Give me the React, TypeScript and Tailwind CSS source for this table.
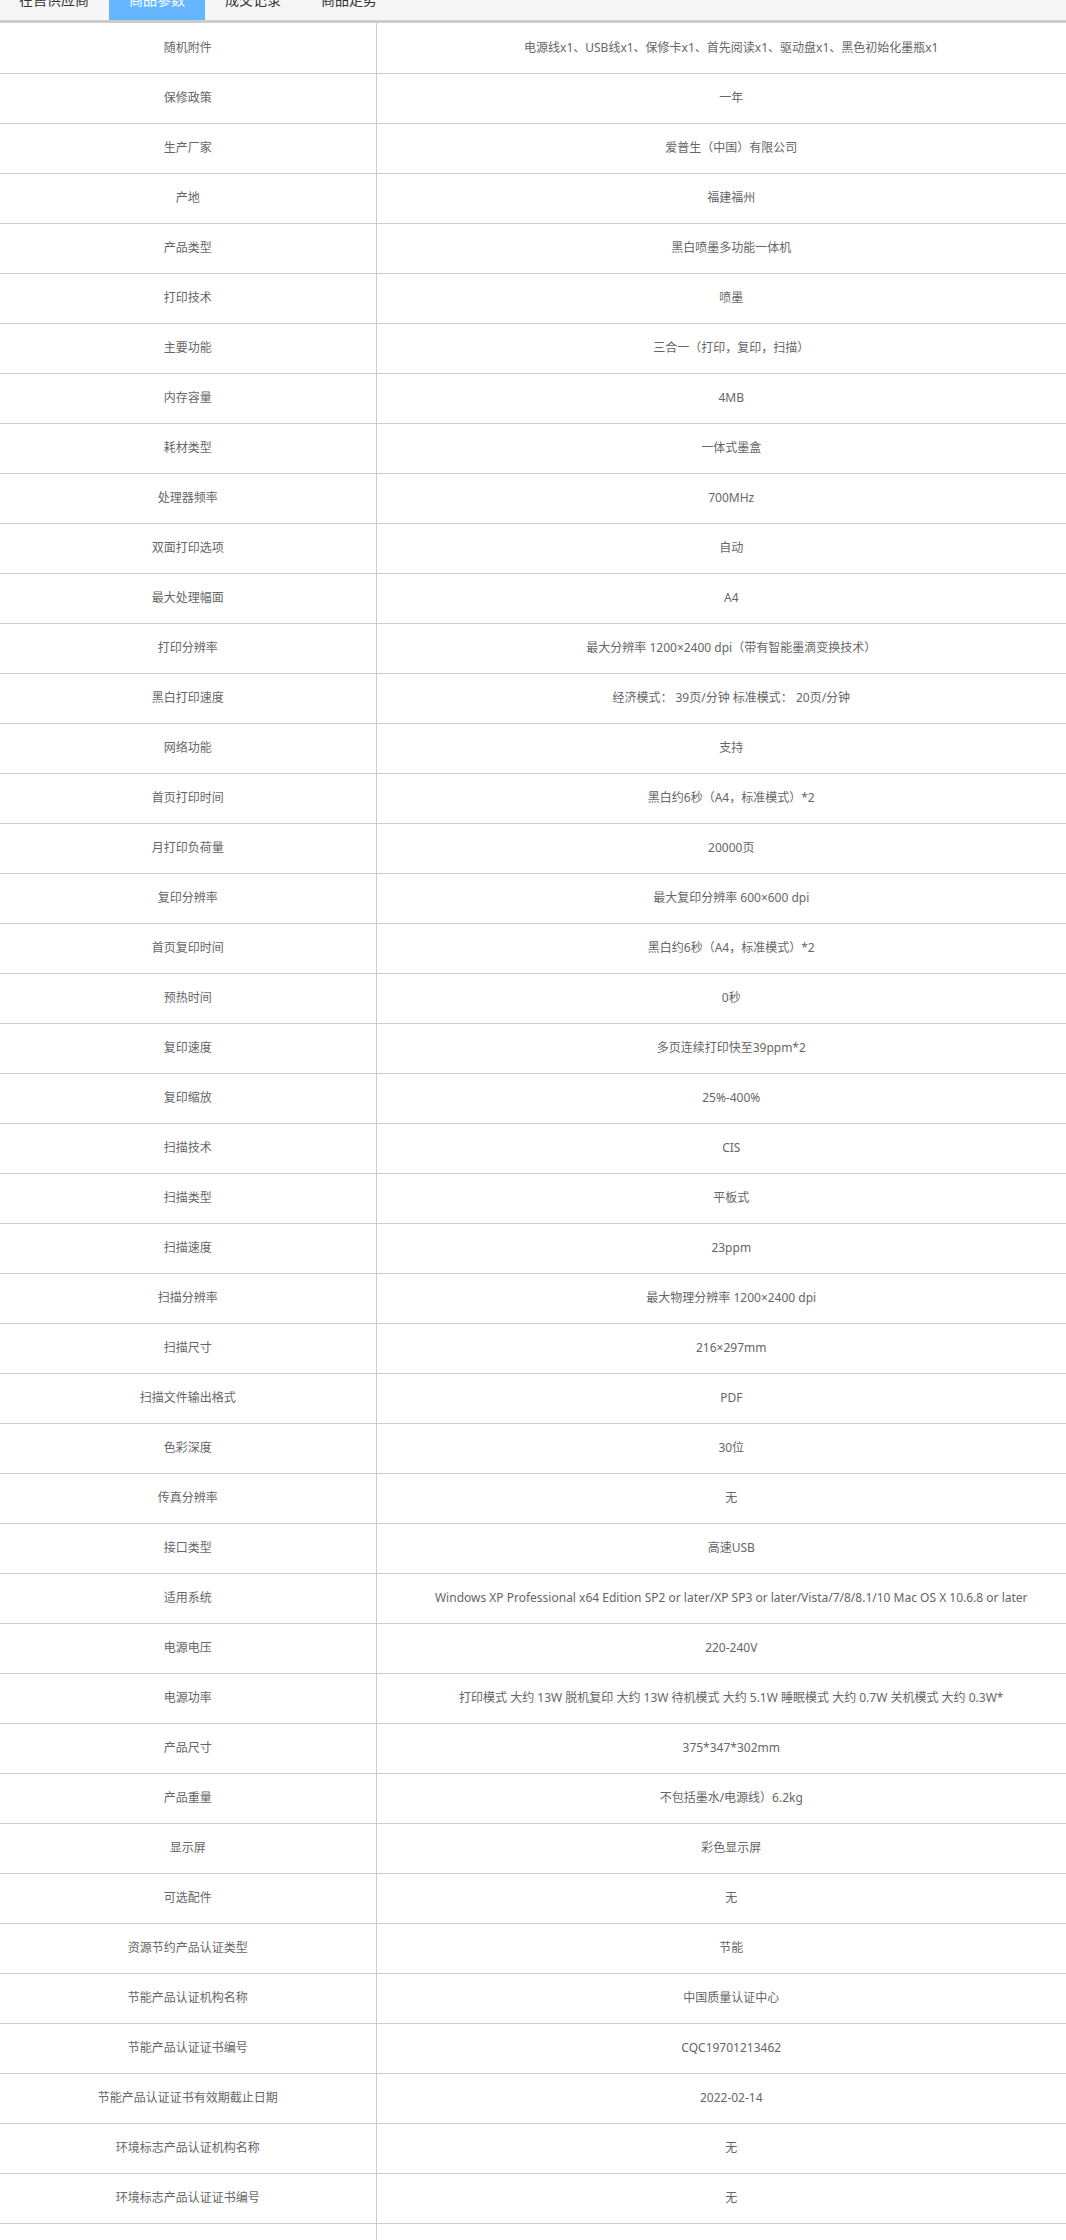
const tabs = ['在售供应商', '商品参数', '成交记录', '商品走势'];

const params: [string, string][] = [
  ['随机附件', '电源线x1、USB线x1、保修卡x1、首先阅读x1、驱动盘x1、黑色初始化墨瓶x1'],
  ['保修政策', '一年'],
  ['生产厂家', '爱普生（中国）有限公司'],
  ['产地', '福建福州'],
  ['产品类型', '黑白喷墨多功能一体机'],
  ['打印技术', '喷墨'],
  ['主要功能', '三合一（打印，复印，扫描）'],
  ['内存容量', '4MB'],
  ['耗材类型', '一体式墨盒'],
  ['处理器频率', '700MHz'],
  ['双面打印选项', '自动'],
  ['最大处理幅面', 'A4'],
  ['打印分辨率', '最大分辨率 1200×2400 dpi（带有智能墨滴变换技术）'],
  ['黑白打印速度', '经济模式： 39页/分钟 标准模式： 20页/分钟'],
  ['网络功能', '支持'],
  ['首页打印时间', '黑白约6秒（A4，标准模式）*2'],
  ['月打印负荷量', '20000页'],
  ['复印分辨率', '最大复印分辨率 600×600 dpi'],
  ['首页复印时间', '黑白约6秒（A4，标准模式）*2'],
  ['预热时间', '0秒'],
  ['复印速度', '多页连续打印快至39ppm*2'],
  ['复印缩放', '25%-400%'],
  ['扫描技术', 'CIS'],
  ['扫描类型', '平板式'],
  ['扫描速度', '23ppm'],
  ['扫描分辨率', '最大物理分辨率 1200×2400 dpi'],
  ['扫描尺寸', '216×297mm'],
  ['扫描文件输出格式', 'PDF'],
  ['色彩深度', '30位'],
  ['传真分辨率', '无'],
  ['接口类型', '高速USB'],
  ['适用系统', 'Windows XP Professional x64 Edition SP2 or later/XP SP3 or later/Vista/7/8/8.1/10 Mac OS X 10.6.8 or later'],
  ['电源电压', '220-240V'],
  ['电源功率', '打印模式 大约 13W 脱机复印 大约 13W 待机模式 大约 5.1W 睡眠模式 大约 0.7W 关机模式 大约 0.3W*'],
  ['产品尺寸', '375*347*302mm'],
  ['产品重量', '不包括墨水/电源线）6.2kg'],
  ['显示屏', '彩色显示屏'],
  ['可选配件', '无'],
  ['资源节约产品认证类型', '节能'],
  ['节能产品认证机构名称', '中国质量认证中心'],
  ['节能产品认证证书编号', 'CQC19701213462'],
  ['节能产品认证证书有效期截止日期', '2022-02-14'],
  ['环境标志产品认证机构名称', '无'],
  ['环境标志产品认证证书编号', '无'],
  ['环境标志产品认证证书有效期截止日期', '无'],
];

export default function App() {
  return (
    <div
      className="w-full overflow-hidden bg-white"
      style={{ fontFamily: '"Noto Sans", "Noto Sans CJK SC", sans-serif' }}
    >
      <div className="-mt-5 flex h-10 w-[1086px] bg-[#f6f6f6] border-b-[3px] border-[#cccccc] box-content">
        {tabs.map((t, i) => (
          <div
            key={t}
            className={
              (i === 0 ? '-ml-px ' : '') +
              (i === 1 ? 'bg-[#66b6ff] text-white ' : 'text-[#333333] ') +
              'px-5 text-[14px] leading-10'
            }
          >
            {t}
          </div>
        ))}
      </div>
      <table className="w-[1086px] border-collapse text-[12px] text-[#666666]">
        <tbody>
          {params.map(([k, v]) => (
            <tr key={k} className="h-[50px] border-b border-[#cccccc]">
              <td className="w-[376px] border-r border-[#cccccc] p-0 text-center align-middle">{k}</td>
              <td className="p-0 text-center align-middle">{v}</td>
            </tr>
          ))}
        </tbody>
      </table>
    </div>
  );
}
